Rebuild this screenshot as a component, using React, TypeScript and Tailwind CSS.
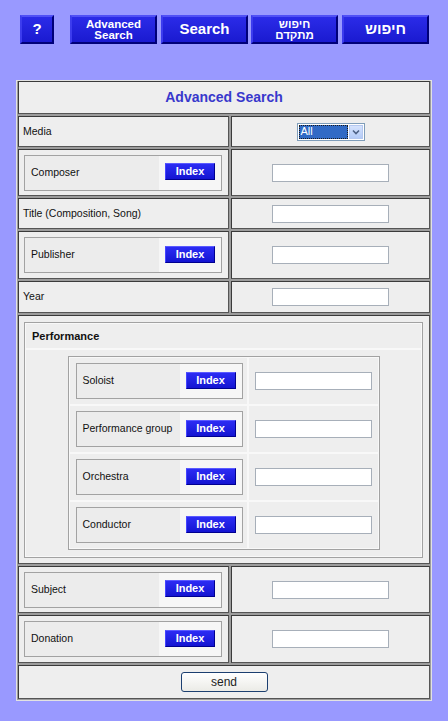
import React from 'react';

const FONT = "font-['Liberation_Sans','DejaVu_Sans',sans-serif]";

const NavButton: React.FC<{ className?: string; children: React.ReactNode }> = ({ className = '', children }) => (
  <div
    className={`flex h-[29px] flex-col items-center justify-center border-2 border-t-[#5050f6] border-l-[#3c3cee] border-b-[#000078] border-r-[#000078] bg-linear-to-b from-[#2b2be8] to-[#1a1ad0] font-bold text-white ${className}`}
  >
    {children}
  </div>
);

const IndexButton = () => (
  <span className="mb-[2px] flex h-[17px] w-[50px] items-center justify-center border border-t-[#5a5aff] border-l-[#4444ff] border-b-[#000090] border-r-[#000090] bg-linear-to-b from-[#2c2cf4] to-[#1414d2] text-[11px] leading-none font-bold text-white">
    Index
  </span>
);

const TextInput = () => (
  <div className="h-[18px] w-[117px] border border-[#a7afb9] bg-white" />
);

const LabelBox: React.FC<{ label: string }> = ({ label }) => (
  <div className="flex h-[36px] flex-1 border border-[#a2a2a2]">
    <div className="flex flex-1 items-center bg-[#ececec] pl-[6px]">{label}</div>
    <div className="flex items-center bg-[#f6f6f6] px-[6px]">
      <IndexButton />
    </div>
  </div>
);

const Cell: React.FC<{ className?: string; children?: React.ReactNode }> = ({ className = '', children }) => (
  <div
    className={`border border-t-[#3a3a3a] border-l-[#3a3a3a] border-b-[#555555] border-r-[#555555] bg-[#eeeeee] ${className}`}
  >
    {children}
  </div>
);

const MediaSelect = () => (
  <div className="flex h-[18px] w-[68px] items-stretch border border-[#7f9db9] bg-white p-[1px]">
    <div className="flex flex-1 items-center border border-dotted border-[#1a1a1a] bg-[#316ac5] pl-[1px] text-[11px] leading-none text-white">
      All
    </div>
    <div className="ml-[1px] flex w-[14px] items-center justify-center border border-[#b5c8f0] bg-linear-to-b from-[#d6e3fd] to-[#b4cbf7]">
      <svg width="8" height="6" viewBox="0 0 8 6">
        <path d="M1 1.5 L4 4.5 L7 1.5" fill="none" stroke="#4d6185" strokeWidth="1.6" />
      </svg>
    </div>
  </div>
);

const performers = ['Soloist', 'Performance group', 'Orchestra', 'Conductor'];

export default function App() {
  return (
    <div className={`min-h-[721px] bg-[#9999ff] ${FONT} text-[10.5px] text-[#111111]`}>
      <div className="flex pt-[15px] pl-[20px]">
        <NavButton className="w-[34px] text-[15px]">?</NavButton>
        <NavButton className="ml-[16px] w-[87px] text-[11.5px] leading-[11px]">
          <span>Advanced</span>
          <span>Search</span>
        </NavButton>
        <NavButton className="ml-[4px] w-[87px] text-[15px]">Search</NavButton>
        <NavButton className="ml-[3px] w-[87px] text-[11.5px] leading-[11px]">
          <span dir="rtl">חיפוש</span>
          <span dir="rtl">מתקדם</span>
        </NavButton>
        <NavButton className="ml-[4px] w-[87px] text-[15px]">
          <span dir="rtl">חיפוש</span>
        </NavButton>
      </div>

      <div className="mx-[16px] mt-[36px] w-[416px] border border-[#e2e2e2] bg-[#9c9c9c] px-[1px] pb-[1px]">
        <div className="grid grid-cols-[211px_1fr] gap-[2px]">
          <Cell className="col-span-2 flex h-[33px] items-center justify-center text-[14px] font-bold text-[#3838cc]">
            Advanced Search
          </Cell>

          <Cell className="flex h-[31px] items-center pl-[4px]">Media</Cell>
          <Cell className="flex h-[31px] items-center justify-center">
            <MediaSelect />
          </Cell>

          <Cell className="flex h-[47px] items-center pr-[6px] pl-[5px]">
            <LabelBox label="Composer" />
          </Cell>
          <Cell className="flex h-[47px] items-center justify-center">
            <TextInput />
          </Cell>

          <Cell className="flex h-[31px] items-center pl-[4px]">Title (Composition, Song)</Cell>
          <Cell className="flex h-[31px] items-center justify-center">
            <TextInput />
          </Cell>

          <Cell className="flex h-[48px] items-center pr-[6px] pl-[5px]">
            <LabelBox label="Publisher" />
          </Cell>
          <Cell className="flex h-[48px] items-center justify-center">
            <TextInput />
          </Cell>

          <Cell className="flex h-[32px] items-center pl-[4px]">Year</Cell>
          <Cell className="flex h-[32px] items-center justify-center">
            <TextInput />
          </Cell>

          <Cell className="col-span-2 flex h-[249px] flex-col pt-[6px] pr-[6px] pb-[5px] pl-[5px]">
            <div className="flex flex-1 flex-col gap-[2px] border border-[#a2a2a2] bg-[#f8f8f8] p-[1px]">
              <div className="flex h-[24px] items-center bg-[#eeeeee] pl-[6px] text-[11px] font-bold">
                Performance
              </div>
              <div className="flex flex-1 justify-center bg-[#eeeeee] pt-[6px]">
                <div className="grid h-fit w-[312px] grid-cols-[177px_1fr] gap-[2px] border border-[#a2a2a2] bg-[#f8f8f8] p-[1px]">
                  {performers.map((p) => (
                    <React.Fragment key={p}>
                      <div className="flex h-[46px] items-center bg-[#eeeeee] pr-[4px] pl-[6px]">
                        <LabelBox label={p} />
                      </div>
                      <div className="flex h-[46px] items-center justify-center bg-[#eeeeee]">
                        <TextInput />
                      </div>
                    </React.Fragment>
                  ))}
                </div>
              </div>
            </div>
          </Cell>

          <Cell className="flex h-[47px] items-center pr-[6px] pl-[5px]">
            <LabelBox label="Subject" />
          </Cell>
          <Cell className="flex h-[47px] items-center justify-center">
            <TextInput />
          </Cell>

          <Cell className="flex h-[48px] items-center pr-[6px] pl-[5px]">
            <LabelBox label="Donation" />
          </Cell>
          <Cell className="flex h-[48px] items-center justify-center">
            <TextInput />
          </Cell>

          <Cell className="col-span-2 flex h-[34px] items-center justify-center">
            <button className="h-[20px] w-[87px] rounded-[3px] border border-[#1c3f70] bg-linear-to-b from-[#ffffff] to-[#ebebe6] text-[12px] leading-none text-[#222222]">
              send
            </button>
          </Cell>
        </div>
      </div>
    </div>
  );
}
